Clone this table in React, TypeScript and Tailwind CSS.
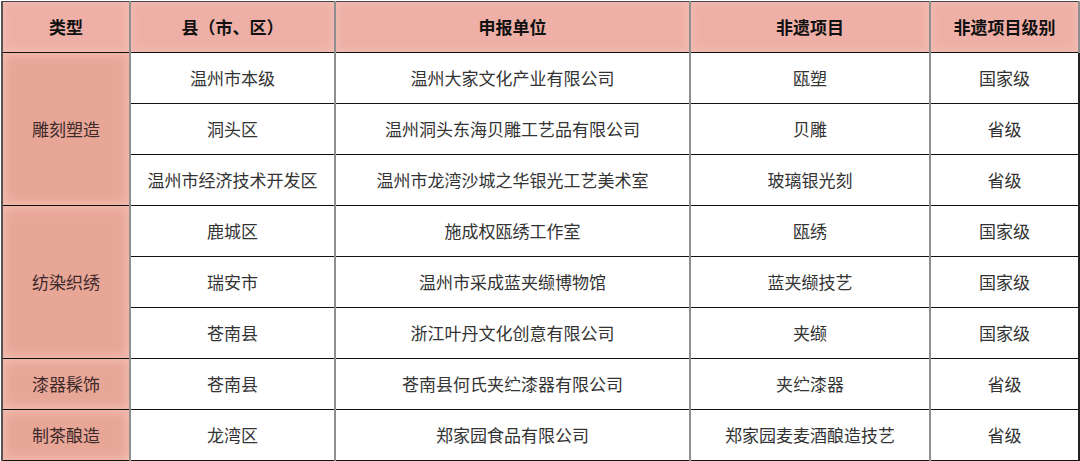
import React from "react";

interface Row {
  county: string;
  unit: string;
  item: string;
  level: string;
}

interface Group {
  type: string;
  rows: Row[];
}

const groups: Group[] = [
  {
    type: "雕刻塑造",
    rows: [
      { county: "温州市本级", unit: "温州大家文化产业有限公司", item: "瓯塑", level: "国家级" },
      { county: "洞头区", unit: "温州洞头东海贝雕工艺品有限公司", item: "贝雕", level: "省级" },
      { county: "温州市经济技术开发区", unit: "温州市龙湾沙城之华银光工艺美术室", item: "玻璃银光刻", level: "省级" },
    ],
  },
  {
    type: "纺染织绣",
    rows: [
      { county: "鹿城区", unit: "施成权瓯绣工作室", item: "瓯绣", level: "国家级" },
      { county: "瑞安市", unit: "温州市采成蓝夹缬博物馆", item: "蓝夹缬技艺", level: "国家级" },
      { county: "苍南县", unit: "浙江叶丹文化创意有限公司", item: "夹缬", level: "国家级" },
    ],
  },
  {
    type: "漆器髹饰",
    rows: [{ county: "苍南县", unit: "苍南县何氏夹纻漆器有限公司", item: "夹纻漆器", level: "省级" }],
  },
  {
    type: "制茶酿造",
    rows: [{ county: "龙湾区", unit: "郑家园食品有限公司", item: "郑家园麦麦酒酿造技艺", level: "省级" }],
  },
];

const headers = ["类型", "县（市、区）", "申报单位", "非遗项目", "非遗项目级别"];

// vertical rules are grey, horizontal rules near black
const cell = "border-x-2 border-x-[#8f8f8f] border-y-[1.5px] border-y-[#111] text-center align-middle p-0";

export default function App() {
  return (
    <div
      className="w-[1080px] h-[461px] bg-white pt-px pl-px"
      style={{ fontFamily: '"Noto Sans CJK SC", "Noto Sans", sans-serif' }}
    >
      <table className="border-collapse table-fixed w-[1077px] text-[17px] text-[#333]">
        <colgroup>
          <col className="w-[128px]" />
          <col className="w-[205px]" />
          <col className="w-[355px]" />
          <col className="w-[240px]" />
          <col className="w-[149px]" />
        </colgroup>
        <thead>
          <tr className="h-[51px] bg-[#eeb0a6]">
            {headers.map((h, i) => (
              <th
                key={h}
                className={`${cell} font-bold text-[#111] ${i === 0 ? "border-l-[#555]" : ""} border-t-[#444] shadow-[inset_0_0_6px_2px_#f2bdb4]`}
              >
                {h}
              </th>
            ))}
          </tr>
        </thead>
        <tbody>
          {groups.map((g) =>
            g.rows.map((r, idx) => (
              <tr key={g.type + r.county + r.item} className="h-[51px]">
                {idx === 0 && (
                  <td
                    rowSpan={g.rows.length}
                    className={`${cell} bg-[#e8a697] text-[#3d2a2a] border-l-[#555] shadow-[inset_0_0_8px_3px_#f1bbad]`}
                  >
                    {g.type}
                  </td>
                )}
                <td className={cell}>{r.county}</td>
                <td className={cell}>{r.unit}</td>
                <td className={cell}>{r.item}</td>
                <td className={`${cell} border-r-[#222]`}>{r.level}</td>
              </tr>
            ))
          )}
        </tbody>
      </table>
    </div>
  );
}
